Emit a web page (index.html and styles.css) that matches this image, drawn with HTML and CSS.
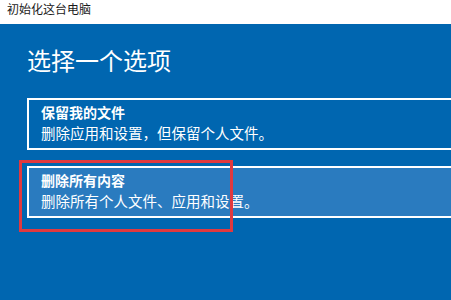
FILE: index.html
```html
<!DOCTYPE html>
<html lang="zh-CN">
<head>
    <meta charset="UTF-8">
    <title>初始化这台电脑</title>
    <link rel="stylesheet" href="styles.css">
</head>
<body>
    <div class="title-bar">初始化这台电脑</div>

    <div class="main">
        <h1>选择一个选项</h1>

        <div class="option">
            <div class="option-title">保留我的文件</div>
            <div class="option-desc">删除应用和设置，但保留个人文件。</div>
        </div>

        <div class="option selected">
            <div class="option-title">删除所有内容</div>
            <div class="option-desc">删除所有个人文件、应用和设置。</div>
            <div class="highlight"></div>
        </div>
    </div>
</body>
</html>
```

FILE: styles.css
```css
body {
    margin: 0;
    width: 451px;
    height: 300px;
    overflow: hidden;
    font-family: "Noto Sans CJK SC", "Noto Sans", sans-serif;
    background-color: #0066b0;
}

.title-bar {
    height: 24px;
    line-height: 18px;
    padding-left: 7px;
    background-color: white;
    color: #1a1a1a;
    font-size: 12px;
}

.main {
    padding-left: 27px;
    height: 276px;
    background-color: #0066b0;
    color: white;
}

h1 {
    margin: 0;
    padding-top: 20px;
    height: 32px;
    line-height: 32px;
    font-size: 24px;
    font-weight: 400;
}

/* cards run off the right edge, so no right border */
.option {
    position: relative;
    box-sizing: border-box;
    height: 52px;
    margin-top: 22px;
    padding: 3px 0 0 12px;
    border: 2px solid white;
    border-right: none;
}

.option + .option {
    margin-top: 16px;
}

.option.selected {
    background-color: #2a7bbf;
}

.option-title {
    line-height: 18px;
    font-size: 14px;
    font-weight: 700;
}

.option-desc {
    margin-top: 1px;
    line-height: 22px;
    font-size: 14.5px;
}

.highlight {
    position: absolute;
    left: -10px;
    top: -8px;
    width: 208px;
    height: 66px;
    border: 3px solid #e0393f;
}
```
